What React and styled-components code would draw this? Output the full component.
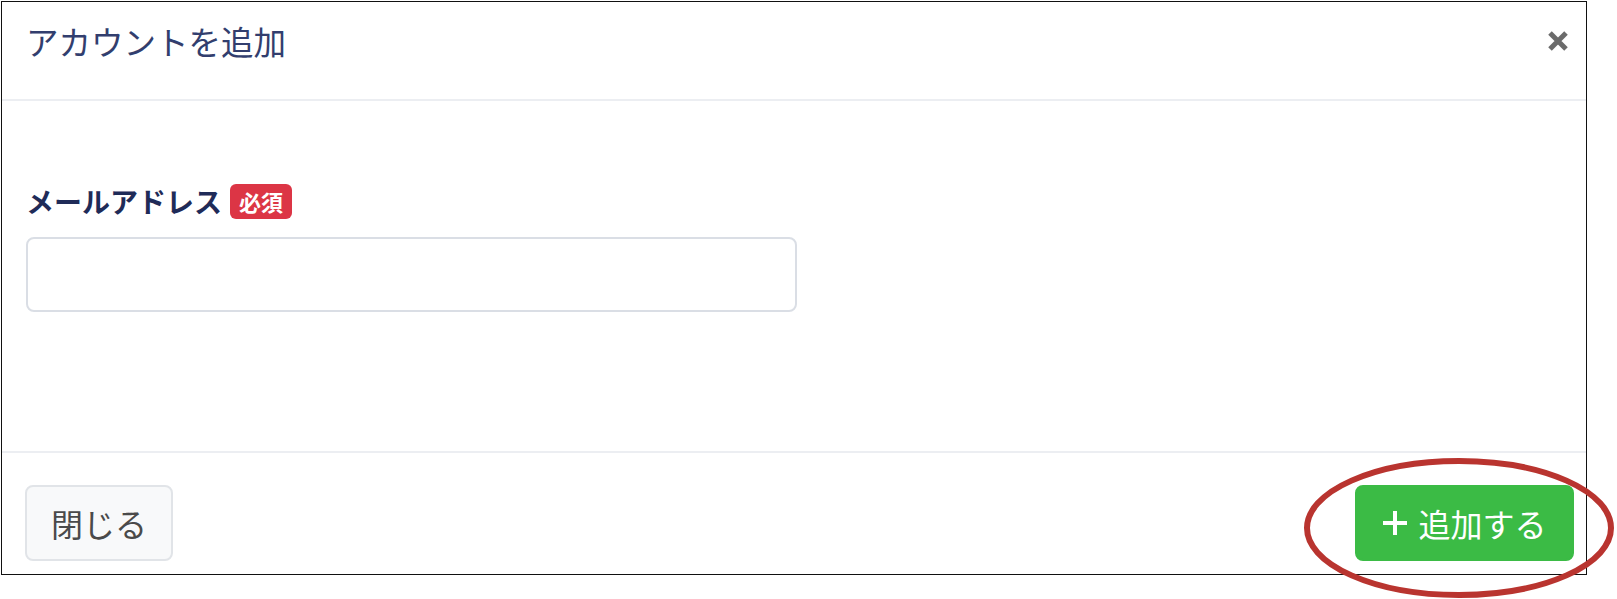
import React from 'react';
import styled, { createGlobalStyle } from 'styled-components';

const GlobalStyle = createGlobalStyle`
  html, body {
    margin: 0;
    padding: 0;
    background: #ffffff;
  }
  body {
    font-family: "Noto Sans CJK JP", "Noto Sans", "Liberation Sans", sans-serif;
  }
`;

const Page = styled.div`
  position: relative;
  width: 1617px;
  height: 599px;
  padding: 1px 0 0 1px;
  box-sizing: border-box;
  overflow: hidden;
`;

const Dialog = styled.div`
  width: 1586px;
  height: 574px;
  box-sizing: border-box;
  border: 1px solid #111;
  background: #fff;
  display: flex;
  flex-direction: column;
`;

const Header = styled.div`
  height: 97px;
  flex: none;
  box-sizing: content-box;
  display: flex;
  align-items: center;
  justify-content: space-between;
  padding: 0 17px 0 24px;
  border-bottom: 2px solid #eceef2;
`;

const HeaderInner = styled.div`
  flex: 1;
  height: 78px;
  align-self: flex-start;
  display: flex;
  align-items: center;
  justify-content: space-between;
`;

const Title = styled.h2`
  margin: 0;
  font-size: 32.5px;
  font-weight: 400;
  color: #323e6e;
  line-height: 1;
`;

const CloseX = styled.button`
  border: none;
  background: none;
  padding: 0;
  width: 22px;
  height: 22px;
  display: flex;
  cursor: pointer;
`;

const Body = styled.div`
  height: 352px;
  flex: none;
  box-sizing: border-box;
  padding: 82px 24px 0 24px;
  border-bottom: 2px solid #eceef2;
`;

const LabelRow = styled.div`
  display: flex;
  align-items: center;
  gap: 8px;
  height: 36px;
`;

const Label = styled.label`
  font-size: 28px;
  font-weight: 700;
  color: #1f2b58;
  line-height: 1;
`;

const Badge = styled.span`
  display: inline-flex;
  align-items: center;
  justify-content: center;
  height: 35px;
  padding: 0 9px;
  border-radius: 6px;
  background: #dc3545;
  color: #fff;
  font-size: 22px;
  font-weight: 700;
  line-height: 1;
`;

const Input = styled.input`
  display: block;
  margin-top: 18px;
  width: 771px;
  height: 75px;
  box-sizing: border-box;
  border: 2px solid #dadee5;
  border-radius: 8px;
  background: #fff;
  outline: none;
  font-size: 24px;
  padding: 0 16px;
`;

const Footer = styled.div`
  flex: 1;
  display: flex;
  justify-content: space-between;
  align-items: flex-start;
  padding: 32px 12px 0 23px;
`;

const Button = styled.button`
  height: 76px;
  box-sizing: border-box;
  border-radius: 8px;
  font-family: inherit;
  font-size: 32px;
  line-height: 1;
  display: inline-flex;
  align-items: center;
  justify-content: center;
  gap: 10px;
  cursor: pointer;
  border: 2px solid ${p => (p.$primary ? '#3bbb45' : '#e1e4e8')};
  background: ${p => (p.$primary ? '#3bbb45' : '#f8f9fa')};
  color: ${p => (p.$primary ? '#ffffff' : '#4a4a4a')};
  width: ${p => p.$width}px;
`;

const Annotation = styled.svg`
  position: absolute;
  left: 1298px;
  top: 452px;
  pointer-events: none;
`;

export default function App() {
  return (
    <>
      <GlobalStyle />
      <Page>
        <Dialog>
          <Header>
            <HeaderInner>
              <Title>アカウントを追加</Title>
              <CloseX aria-label="close">
                <svg width="22" height="22" viewBox="0 0 22 22">
                  <path d="M3 3L19 19M19 3L3 19" stroke="#6b6b6b" strokeWidth="5" strokeLinecap="butt" />
                </svg>
              </CloseX>
            </HeaderInner>
          </Header>
          <Body>
            <LabelRow>
              <Label>メールアドレス</Label>
              <Badge>必須</Badge>
            </LabelRow>
            <Input type="email" />
          </Body>
          <Footer>
            <Button $width={148}>閉じる</Button>
            <Button $primary $width={219}>
              <svg width="26" height="26" viewBox="0 0 26 26">
                <path d="M13 1V25M1 13H25" stroke="#fff" strokeWidth="4" />
              </svg>
              追加する
            </Button>
          </Footer>
        </Dialog>
        <Annotation width="330" height="150" viewBox="0 0 330 150">
          <ellipse cx="161" cy="76" rx="152" ry="67" fill="none" stroke="#b9342f" strokeWidth="6" />
        </Annotation>
      </Page>
    </>
  );
}
